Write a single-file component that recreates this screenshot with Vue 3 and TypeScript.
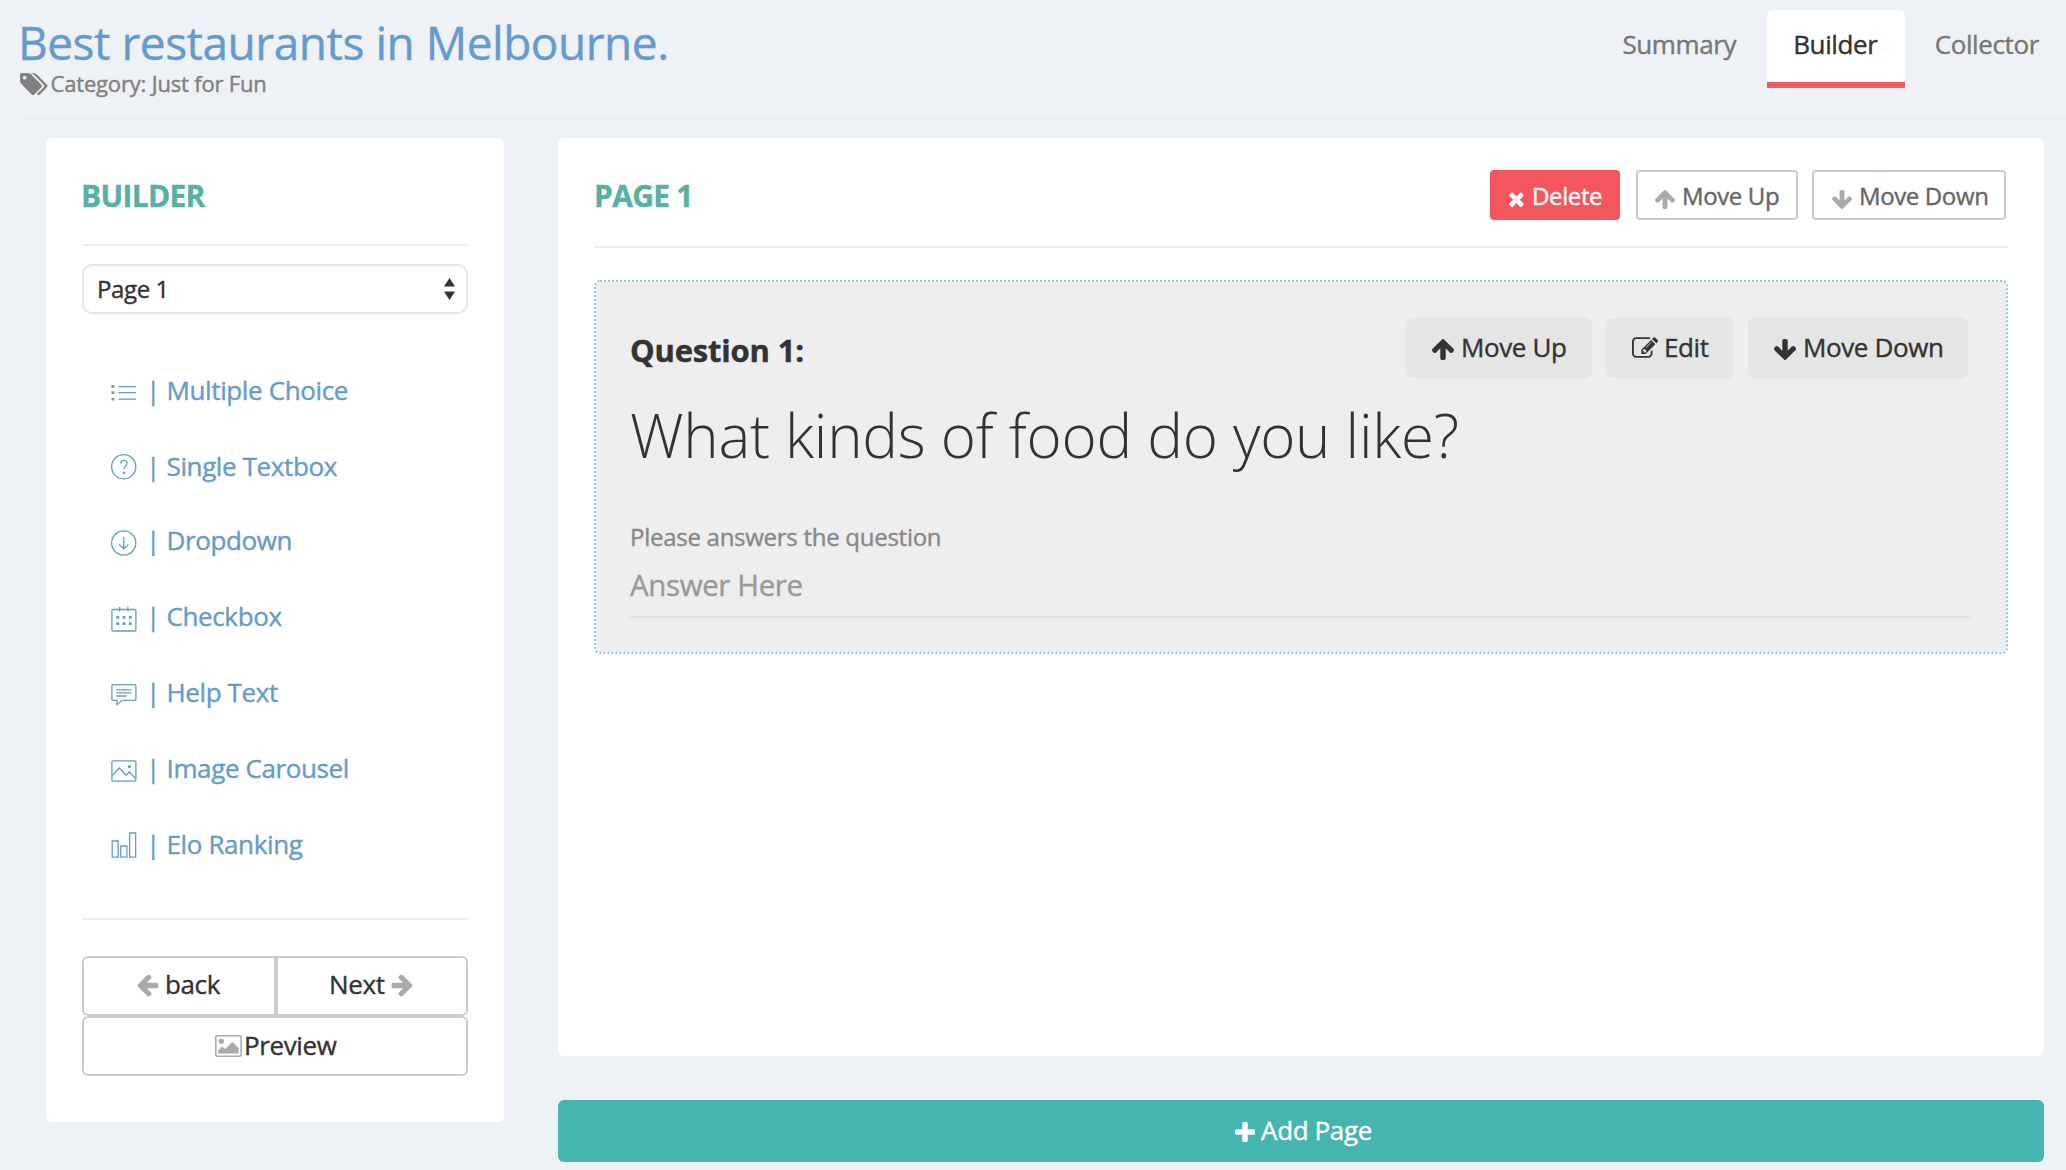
<script setup lang="ts">
interface Tool {
  icon: string
  label: string
}

const tabs: string[] = ['Summary', 'Builder', 'Collector']
const activeTab = 'Builder'

const tools: Tool[] = [
  { icon: 'list', label: 'Multiple Choice' },
  { icon: 'question', label: 'Single Textbox' },
  { icon: 'arrow', label: 'Dropdown' },
  { icon: 'calendar', label: 'Checkbox' },
  { icon: 'speech', label: 'Help Text' },
  { icon: 'picture', label: 'Image Carousel' },
  { icon: 'chart', label: 'Elo Ranking' },
]

const arrowPath =
  'M1675 971q0 51-37 90l-75 75q-38 38-91 38-54 0-90-38l-294-293v704q0 52-37.5 84.5t-90.5 32.5h-128q-53 0-90.5-32.5t-37.5-84.5v-704l-294 293q-36 38-90 38t-90-38l-75-75q-38-38-38-90 0-53 38-91l651-651q35-37 90-37 54 0 91 37l651 651q37 39 37 91z'
const arrowBox = '117 192 1558 1472'
</script>

<template>
  <div class="page">
    <header class="head">
      <div class="heading">
        <h1 class="title">Best restaurants in Melbourne.</h1>
        <div class="category">
          <svg class="tags" viewBox="0 128 1835 1515"><path d="M384 448q0-53-37.5-90.5t-90.5-37.5-90.5 37.5-37.5 90.5 37.5 90.5 90.5 37.5 90.5-37.5 37.5-90.5zm1067 576q0 53-37 90l-491 492q-39 37-91 37-53 0-90-37l-715-716q-38-37-64.5-101t-26.5-117v-416q0-52 38-90t90-38h416q53 0 117 26.5t102 64.5l715 714q37 39 37 91zm384 0q0 53-37 90l-491 492q-39 37-91 37-36 0-59-14t-53-45l470-470q37-37 37-90 0-52-37-91l-715-714q-38-38-102-64.5t-117-26.5h224q53 0 117 26.5t102 64.5l715 714q37 39 37 91z" /></svg>
          <span>Category: Just for Fun</span>
        </div>
      </div>
      <nav class="tabs">
        <a v-for="tab in tabs" :key="tab" class="tab" :class="{ active: tab === activeTab }">{{ tab }}</a>
      </nav>
    </header>

    <main class="body">
      <aside class="card side">
        <h2 class="caption">BUILDER</h2>
        <div class="select">
          <span>Page 1</span>
          <svg viewBox="0 0 11 22"><path d="M5.5 0L11 8.5H0zM5.5 22L0 13.500H11z" /></svg>
        </div>
        <ul class="tools">
          <li v-for="tool in tools" :key="tool.label" class="tool">
            <svg class="line-icon" viewBox="0 0 26 26">
              <template v-if="tool.icon === 'list'">
                <path d="M7.500 6.700H25M7.500 12.700H25M7.500 19.100H25" />
                <path class="solid" d="M.5 5h2.800v2.800H.5zM.5 11.300h2.800v2.800H.5zM.5 17.800h2.800v2.800H.5z" />
              </template>
              <template v-else-if="tool.icon === 'question'">
                <circle cx="12.700" cy="10.800" r="12.100" />
                <path d="M9.700 7.400C9.700 5.300 11 4.400 12.800 4.400S16 5.500 16 7.300C16 9.700 12.900 10 12.900 13.200" />
                <circle class="solid" cx="12.900" cy="16.700" r="1.300" />
              </template>
              <template v-else-if="tool.icon === 'arrow'">
                <circle cx="12.700" cy="13" r="12.100" />
                <path d="M12.700 7V18.600M8 14.400L12.700 18.800L17.400 14.400" />
              </template>
              <template v-else-if="tool.icon === 'calendar'">
                <rect x=".9" y="3.500" width="24" height="21.500" rx="1.200" />
                <path d="M8.600.8V5.500M16.900.8V5.500" />
                <path class="solid" d="M5.400 10h2.800v2.800H5.400zM11.500 10h2.800v2.800h-2.800zM17.900 10h2.800v2.800h-2.800zM5.400 16.200h2.800V19H5.400zM11.500 16.200h2.800V19h-2.800zM17.900 16.200h2.800V19h-2.800z" />
              </template>
              <template v-else-if="tool.icon === 'speech'">
                <path d="M2 2.700H23.800Q24.900 2.700 24.900 3.800V17.200Q24.900 18.300 23.800 18.300H11.300L6 22.700V18.300H2Q.9 18.300.9 17.200V3.800Q.9 2.700 2 2.700z" />
                <path d="M5.200 7.800H20.500M5.200 10.900H20.500M5.200 14H15.200" />
              </template>
              <template v-else-if="tool.icon === 'picture'">
                <rect x=".9" y="2.900" width="24" height="20.200" rx="1.200" />
                <path d="M1.300 17.500L8.300 10L15.300 17.200L18.300 14L24.500 20.500" />
                <circle class="solid" cx="18.400" cy="8.600" r="1.700" />
              </template>
              <template v-else>
                <path d="M1.200 7H7.200V23.200H1.200zM9.800 12H15.900V23.200H9.800zM18.600-1H24.700V23.200H18.600z" />
              </template>
            </svg>
            <span class="bar">|</span>
            <span>{{ tool.label }}</span>
          </li>
        </ul>
        <div class="pager">
          <button class="btn back">
            <svg class="arrow left" :viewBox="arrowBox"><path :d="arrowPath" /></svg>back
          </button>
          <button class="btn next">
            Next<svg class="arrow right" :viewBox="arrowBox"><path :d="arrowPath" /></svg>
          </button>
        </div>
        <button class="btn preview">
          <svg class="photo" viewBox="0 0 27 22">
            <rect x=".8" y=".8" width="25.400" height="20.400" rx="1.500" />
            <circle cx="6.300" cy="6.300" r="2.700" />
            <path d="M3.200 18.600V15.500L7.300 11.500L10 14L17.300 7L23.700 13V18.600z" />
          </svg>Preview
        </button>
      </aside>

      <div class="content">
        <section class="card sheet">
          <div class="sheet-head">
            <h2 class="caption">PAGE 1</h2>
            <div class="actions">
              <button class="small delete">
                <svg class="cross" viewBox="302 238 1188 1316"><path d="M1490 1322q0 40-28 68l-136 136q-28 28-68 28t-68-28l-294-294-294 294q-28 28-68 28t-68-28l-136-136q-28-28-28-68t28-68l294-294-294-294q-28-28-28-68t28-68l136-136q28-28 68-28t68 28l294 294 294-294q28-28 68-28t68 28l136 136q28 28 28 68t-28 68l-294 294 294 294q28 28 28 68z" /></svg>Delete
              </button>
              <button class="small up">
                <svg class="arrow" :viewBox="arrowBox"><path :d="arrowPath" /></svg>Move Up
              </button>
              <button class="small down">
                <svg class="arrow flip" :viewBox="arrowBox"><path :d="arrowPath" /></svg>Move Down
              </button>
            </div>
          </div>

          <article class="question">
            <div class="question-head">
              <h3 class="number">Question 1:</h3>
              <div class="question-actions">
                <button class="grey up">
                  <svg class="arrow" :viewBox="arrowBox"><path :d="arrowPath" /></svg>Move Up
                </button>
                <button class="grey edit">
                  <svg class="pencil" viewBox="0 128 1784 1408"><path d="M888 1184l116-116-152-152-116 116v56h96v96h56zm440-720q-16-16-33 1l-350 350q-17 17-1 33t33-1l350-350q17-17 1-33zm80 594v190q0 119-84.500 203.500t-203.500 84.500h-832q-119 0-203.500-84.500t-84.500-203.500v-832q0-119 84.500-203.500t203.500-84.500h832q63 0 117 25 15 7 18 23 3 17-9 29l-49 49q-14 14-32 8-23-6-45-6h-832q-66 0-113 47t-47 113v832q0 66 47 113t113 47h832q66 0 113-47t47-113v-126q0-13 9-22l64-64q15-15 35-7t20 29zm-96-738l288 288-672 672h-288v-288zm444 132l-92 92-288-288 92-92q28-28 68-28t68 28l152 152q28 28 28 68t-28 68z" /></svg>Edit
                </button>
                <button class="grey down">
                  <svg class="arrow flip" :viewBox="arrowBox"><path :d="arrowPath" /></svg>Move Down
                </button>
              </div>
            </div>
            <p class="prompt">What kinds of food do you like?</p>
            <p class="hint">Please answers the question</p>
            <div class="answer">Answer Here</div>
          </article>
        </section>

        <button class="add">
          <svg class="plus" viewBox="192 128 1408 1408"><path d="M1600 736v192q0 40-28 68t-68 28h-416v416q0 40-28 68t-68 28h-192q-40 0-68-28t-28-68v-416h-416q-40 0-68-28t-28-68v-192q0-40 28-68t68-28h416v-416q0-40 28-68t68-28h192q40 0 68 28t28 68v416h416q40 0 68 28t28 68z" /></svg>Add Page
        </button>
      </div>
    </main>
  </div>
</template>

<style>
body {
  background: #eef1f6;
  overflow: hidden;
}
</style>

<style scoped>
.page {
  width: 2066px;
  height: 1170px;
  box-sizing: border-box;
  font-family: 'Open Sans', sans-serif;
  font-size: 26px;
  letter-spacing: -0.380px;
  -webkit-text-stroke: 0.400px currentColor;
  color: #333;
  overflow: hidden;
}
.page * {
  box-sizing: border-box;
}
h1, h2, h3, p, ul {
  margin: 0;
  padding: 0;
}
svg {
  display: block;
  flex: none;
  fill: currentColor;
  overflow: visible;
}
button {
  display: flex;
  align-items: center;
  margin: 0;
  padding: 0;
  border: 0;
  font: inherit;
  letter-spacing: inherit;
  color: inherit;
  white-space: nowrap;
}

.head {
  display: flex;
  justify-content: space-between;
  height: 120px;
  margin-left: 18px;
  border-bottom: 2px solid #eee;
}
.title {
  margin-top: 19px;
  font-size: 46px;
  font-weight: 400;
  letter-spacing: -0.470px;
  line-height: 46px;
  color: #659bcb;
  white-space: nowrap;
}
.category {
  display: flex;
  align-items: center;
  height: 30px;
  margin-top: 4px;
  margin-left: 2.500px;
  font-size: 22px;
  letter-spacing: -0.180px;
  line-height: 30px;
  color: #808080;
}
.category span {
  margin-top: -2px;
}
.tags {
  width: 26.500px;
  height: 22px;
  margin-right: 3.500px;
}
.tabs {
  display: flex;
  padding-top: 10px;
}
.tab {
  height: 78px;
  padding: 0 27px;
  line-height: 68px;
  color: #777;
  border-bottom: 6px solid transparent;
  border-radius: 6px 6px 0 0;
}
.tab:first-child {
  padding-right: 30.500px;
}
.tab.active {
  width: 138px;
  margin-right: 3px;
  padding: 0 0 0 26.500px;
  background: #fff;
  border-bottom: 0;
  box-shadow: inset 0 -6px #ed5b60;
  color: #333;
}

.body {
  display: flex;
  align-items: flex-start;
  gap: 54px;
  padding: 18px 22px 0 46px;
}
.card {
  background: #fff;
  border-radius: 6px;
}
.caption {
  font-size: 30px;
  font-weight: 700;
  letter-spacing: -0.700px;
  line-height: 43px;
  color: #57b0a1;
}
.side {
  width: 458px;
  height: 984px;
  padding: 36px 36px 0;
}
.side .caption {
  height: 72px;
  text-indent: -1px;
  border-bottom: 2px solid #eee;
}
.select {
  display: flex;
  justify-content: space-between;
  align-items: center;
  height: 50px;
  margin-top: 18px;
  padding: 0 11px 0 13px;
  border: 2px solid #e5e5e5;
  border-radius: 10px;
  font-size: 24px;
}
.select span {
  margin-top: -2px;
}
.select svg {
  width: 11px;
  height: 22px;
}
.tools {
  height: 606px;
  padding: 58px 0 0 29px;
  border-bottom: 2px solid #eee;
  list-style: none;
}
.tool {
  display: flex;
  align-items: center;
  height: 36px;
  margin-bottom: 40px;
  line-height: 36px;
  color: #659bcb;
  white-space: nowrap;
}
.tool:nth-child(2) {
  margin-bottom: 38px;
}
.line-icon {
  width: 26px;
  height: 26px;
  margin-top: 6px;
  fill: none;
  stroke: currentColor;
  stroke-width: 1.300;
}
.line-icon .solid {
  fill: currentColor;
  stroke: none;
}
.bar {
  width: 20.500px;
  margin-left: 9px;
}
.pager {
  display: flex;
  margin-top: 36px;
}
.btn {
  height: 60px;
  padding-bottom: 4px;
  background: #fff;
  border: 2px solid #ccc;
  border-radius: 6px;
}
.btn svg,
.small .arrow {
  color: #aaa;
}
.arrow {
  width: 22px;
  height: 21px;
}
.back {
  width: 194px;
  padding-left: 53px;
  border-radius: 6px 0 0 6px;
}
.next {
  width: 192px;
  padding-left: 51px;
  border-radius: 0 6px 6px 0;
}
.left {
  margin: 3px 6px 0 0;
  transform: rotate(-90deg);
}
.right {
  margin: 3px 0 0 6px;
  transform: rotate(90deg);
}
.preview {
  width: 100%;
  padding-left: 131px;
  padding-bottom: 2px;
}
.photo {
  width: 27px;
  height: 22px;
  margin: 2px 2px 0 0;
}
.photo rect {
  fill: none;
  stroke: currentColor;
  stroke-width: 1.600;
}

.content {
  width: 1486px;
}
.sheet {
  height: 918px;
  padding: 32px 36px 0;
}
.sheet-head {
  display: flex;
  justify-content: space-between;
  height: 78px;
  padding-right: 2px;
  border-bottom: 2px solid #eee;
}
.sheet-head .caption {
  margin-top: 4px;
}
.actions {
  display: flex;
}
.small {
  height: 50px;
  padding-top: 1px;
  background: #fff;
  border: 2px solid #ccc;
  border-radius: 4px;
  font-size: 24px;
  color: #666;
}
.small.delete {
  width: 130px;
  margin-right: 16px;
  padding-left: 17px;
  background: #f3565d;
  border-color: #f3565d;
  color: #fff;
}
.cross {
  width: 15px;
  height: 16px;
  margin: 7px 8px 0 0;
}
.small.up {
  width: 162px;
  margin-right: 14px;
  padding-left: 17px;
}
.small.down {
  width: 194px;
  padding-left: 18px;
}
.small .arrow {
  width: 20px;
  height: 19px;
  margin: 7px 7px 0 0;
}
.flip {
  transform: scaleY(-1);
}

.question {
  height: 374px;
  margin-top: 32px;
  padding: 36px 36px 0 34px;
  background: #eee;
  background-clip: padding-box;
  border: 2px dotted #8cc3ea;
  border-radius: 6px;
}
.question-head {
  display: flex;
  justify-content: space-between;
  height: 60px;
  padding-right: 2px;
}
.number {
  font-size: 31px;
  font-weight: 700;
  letter-spacing: -0.180px;
  line-height: 40px;
  margin-top: 12px;
}
.question-actions {
  display: flex;
  gap: 14px;
}
.grey {
  height: 60px;
  padding: 0 0 3px 26px;
  background: #e5e5e5;
  border-radius: 6px;
}
.grey.up { width: 186px; }
.grey.edit { width: 128px; }
.grey.down { width: 220px; }
.grey .arrow {
  margin: 5px 7px 0 0;
}
.pencil {
  width: 26px;
  height: 21px;
  margin: 2px 6px 0 0;
}
.prompt {
  margin-top: 17px;
  font-size: 60px;
  font-weight: 300;
  letter-spacing: -0.260px;
  -webkit-text-stroke: 0;
  line-height: 80px;
  white-space: nowrap;
}
.hint {
  margin-top: 45px;
  font-size: 24px;
  letter-spacing: -0.270px;
  line-height: 34px;
  color: #888;
}
.answer {
  height: 54px;
  margin-top: 10px;
  border-bottom: 2px solid #e2e2e2;
  font-size: 29.500px;
  line-height: 42px;
  color: #999;
}

.add {
  justify-content: center;
  width: 100%;
  height: 62px;
  margin-top: 44px;
  padding: 0 0 3px 5px;
  background: #45b6af;
  border-radius: 6px;
  color: #fff;
}
.plus {
  width: 20px;
  height: 20px;
  margin: 4px 6px 0 0;
}
</style>
